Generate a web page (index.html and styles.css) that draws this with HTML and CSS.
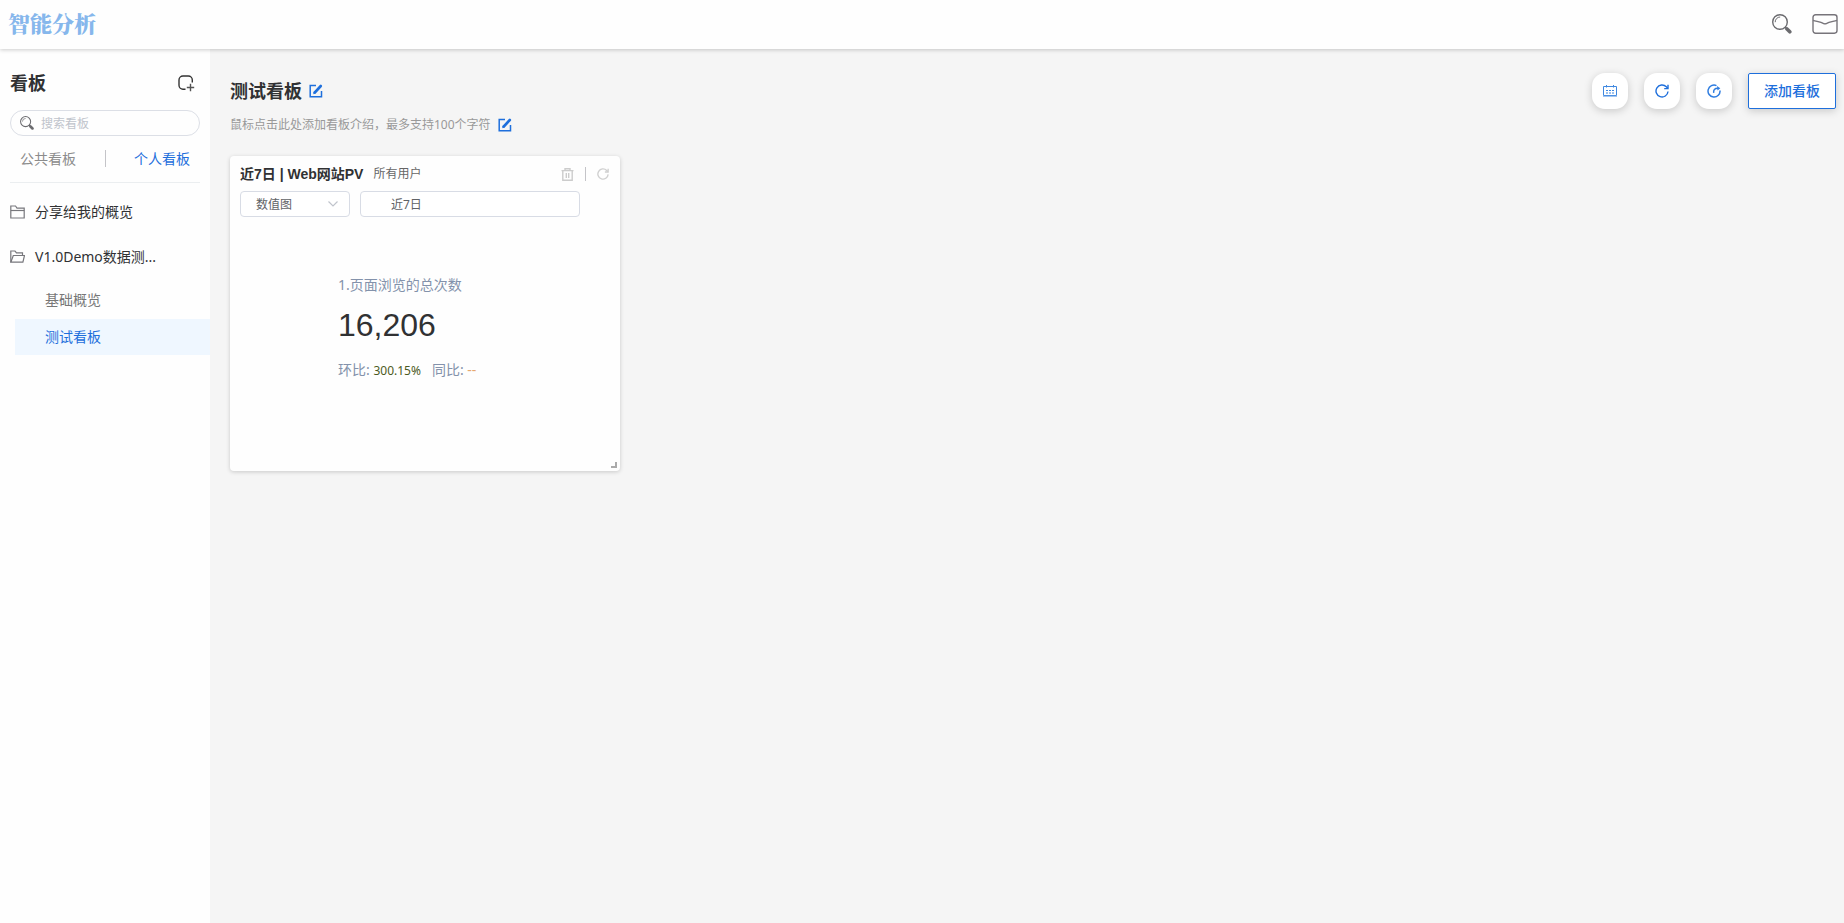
FILE: index.html
```html
<!DOCTYPE html>
<html lang="zh-CN">
<head>
  <meta charset="UTF-8">
  <meta name="viewport" content="width=device-width, initial-scale=1.0">
  <title>智能分析</title>
  <link rel="stylesheet" href="styles.css">
</head>
<body>

  <header class="header">
    <a class="logo" href="#">智能分析</a>
    <div class="header-tools">
      <button class="icon-btn" aria-label="搜索">
        <svg width="20" height="20" viewBox="0 0 20 20" fill="none" stroke="#6b6b6f">
          <circle cx="8" cy="8" r="7.3" stroke-width="1.4"/>
          <path d="M3.2 8.2A5 5 0 0 1 8.2 3" stroke-width="1"/>
          <path d="M13 13l1.6 1.6" stroke-width="1.6"/>
          <path d="M15 15l2.8 2.8" stroke-width="3.6" stroke-linecap="round"/>
        </svg>
      </button>
      <button class="icon-btn" aria-label="消息">
        <svg width="26" height="20" viewBox="0 0 26 20" fill="none" stroke="#77747a" stroke-width="1.4">
          <rect x="1" y="0.8" width="24" height="18.4" rx="2.6"/>
          <path d="M1 6.3c4 1.2 8 1.8 10.3 3.1q1.7.9 3.4 0C17 8.100 21 7.500 25 6.300"/>
        </svg>
      </button>
    </div>
  </header>

  <div class="layout">
    <aside class="sidebar">
      <div class="sidebar-title">
        <h2>看板</h2>
        <button class="icon-btn" aria-label="新建看板">
          <svg width="17" height="17" viewBox="0 0 17 17" fill="none" stroke="#333" stroke-width="1.4">
            <path d="M7.5 14.3H5A4 4 0 0 1 1 10.3V5A4 4 0 0 1 5 1h5.3a4 4 0 0 1 4 4v2.5"/>
            <path d="M12.5 8.8v7.4M8.8 12.5h7.4" stroke="#555"/>
          </svg>
        </button>
      </div>

      <label class="search">
        <svg width="14" height="14" viewBox="0 0 20 20" fill="none" stroke="#6b6b6f">
          <circle cx="8" cy="8" r="7.2" stroke-width="1.5"/>
          <path d="M3.5 8A4.5 4.5 0 0 1 8 3.5" stroke-width="1"/>
          <path d="M13 13l1.6 1.6" stroke-width="1.8"/>
          <path d="M15 15l2.8 2.8" stroke-width="3.8" stroke-linecap="round"/>
        </svg>
        <input type="text" placeholder="搜索看板" aria-label="搜索看板">
      </label>

      <div class="tabs">
        <button class="tab">公共看板</button>
        <span class="tab-line"></span>
        <button class="tab active">个人看板</button>
      </div>

      <nav class="menu">
        <a class="folder" href="#">
          <svg width="15" height="14" viewBox="0 0 15 14" fill="none" stroke="#77777c" stroke-width="1.2">
            <path d="M.8 13V1h4.7l1.5 2.2h7.2V13z"/>
            <path d="M.8 5.5h13.4"/>
          </svg>
          <span>分享给我的概览</span>
        </a>
        <a class="folder" href="#">
          <svg width="15" height="14" viewBox="0 0 15 14" fill="none" stroke="#77777c" stroke-width="1.2">
            <path d="M.8 12.2V1h4.2l1.5 1.8h6V5.5"/>
            <path d="M.8 12.2L3.3 5.5h11.200l-1.600 6.700z"/>
          </svg>
          <span>V1.0Demo数据测...</span>
        </a>
        <a class="board" href="#">基础概览</a>
        <a class="board active" href="#">测试看板</a>
      </nav>
    </aside>

    <main class="main">
      <div class="main-head">
        <div>
          <div class="title-row">
            <h1>测试看板</h1>
            <button class="icon-btn" aria-label="编辑名称">
              <svg width="14" height="14" viewBox="0 0 14 14" fill="none" stroke="#1e6fdc">
                <path d="M7 1.500H1.200v11.300h11.300V7" stroke-width="1.500"/>
                <path d="M5.800 8.500l6-6.500" stroke-width="2.600" stroke-linecap="round"/>
                <path d="M4.600 9.700l.3-1.800 1.400 1.200z" stroke-width=".8"/>
              </svg>
            </button>
          </div>
          <div class="desc-row">
            <p>鼠标点击此处添加看板介绍，最多支持100个字符</p>
            <button class="icon-btn" aria-label="编辑介绍">
              <svg width="14" height="14" viewBox="0 0 14 14" fill="none" stroke="#1e6fdc">
                <path d="M7 1.500H1.200v11.300h11.300V7" stroke-width="1.500"/>
                <path d="M5.800 8.500l6-6.500" stroke-width="2.600" stroke-linecap="round"/>
                <path d="M4.600 9.700l.3-1.800 1.400 1.200z" stroke-width=".8"/>
              </svg>
            </button>
          </div>
        </div>

        <div class="actions">
          <button class="round-btn" aria-label="日期">
            <svg width="14" height="12" viewBox="0 0 14 12" fill="none" stroke="#3f88e0">
              <path d="M.5 1.500h13v9H.5z"/>
              <path d="M0 11.300h14" stroke="#8db8ee"/>
              <path d="M3.500 0v2.500M10.500 0v2.500"/>
              <path d="M3 5.500h8.500M3 8h8.500" stroke-width="1.200" stroke-dasharray="2 1"/>
            </svg>
          </button>
          <button class="round-btn" aria-label="刷新">
            <svg width="14" height="14" viewBox="0 0 14 14" fill="none" stroke="#1e6fdc" stroke-width="1.400">
              <path d="M13 7.500A6 6 0 1 1 11.300 2.800L12.800 4.300"/>
              <path d="M13 .8v3.800H9.200"/>
            </svg>
          </button>
          <button class="round-btn" aria-label="分享">
            <svg width="14" height="14" viewBox="0 0 14 14" fill="none" stroke="#2f7de0" stroke-width="1.500">
              <path d="M9.500 1.600A6 6 0 1 0 13 6.500"/>
              <path d="M6.700 8.800C6.300 6 7.500 4.300 11 4.300"/>
              <path d="M10 2l3.300 2.300L10.500 6.600z" fill="#2f7de0" stroke="none"/>
            </svg>
          </button>
          <button class="add-btn">添加看板</button>
        </div>
      </div>

      <section class="card">
        <div class="card-head">
          <h3>近7日 | Web网站PV</h3>
          <span class="user">所有用户</span>
          <div class="card-tools">
            <button class="icon-btn" aria-label="删除">
              <svg width="13" height="13" viewBox="0 0 13 13" fill="none" stroke="#ccc" stroke-width="1.400">
                <path d="M.5 2.600h12M4 2.400V.7h5v1.700M1.800 3v9.300h9.400V3M5.300 5v5M7.700 5v5"/>
              </svg>
            </button>
            <span class="tool-line"></span>
            <button class="icon-btn" aria-label="刷新">
              <svg width="12" height="12" viewBox="0 0 14 14" fill="none" stroke="#d0d0d0" stroke-width="1.600">
                <path d="M13 7.500A6 6 0 1 1 11.300 2.800L12.800 4.300"/>
                <path d="M13 .8v3.800H9.200"/>
              </svg>
            </button>
          </div>
        </div>

        <div class="filters">
          <div class="select-box">
            <select aria-label="图表类型">
              <option>数值图</option>
            </select>
            <svg width="10" height="6" viewBox="0 0 10 6" fill="none" stroke="#c0c4cc" stroke-width="1.200">
              <path d="M.5.5L5 5 9.500.5"/>
            </svg>
          </div>
          <input class="date" type="text" value="近7日" aria-label="日期范围">
        </div>

        <div class="metric">
          <div class="metric-name">1.页面浏览的总次数</div>
          <div class="metric-value">16,206</div>
          <div class="metric-compare">
            <span>环比: <b class="up">300.15%</b></span>
            <span>同比: <b class="none">--</b></span>
          </div>
        </div>
        <span class="resize"></span>
      </section>
    </main>
  </div>

</body>
</html>
```
FILE: styles.css
```css
* {
  box-sizing: border-box;
}

body {
  margin: 0;
  min-height: 100vh;
  display: flex;
  flex-direction: column;
  font-family: "Noto Sans", "Noto Sans CJK SC", sans-serif;
  font-size: 14px;
  line-height: 20px;
  color: #303133;
  background-color: #f5f5f5;
}

h1, h2, h3, p {
  margin: 0;
}

a {
  color: inherit;
  text-decoration: none;
}

button, input, select {
  font-family: inherit;
  color: inherit;
}

button {
  padding: 0;
  border: none;
  background: none;
  cursor: pointer;
}

.icon-btn {
  display: flex;
}

.header {
  position: relative;
  display: flex;
  align-items: center;
  justify-content: space-between;
  height: 49px;
  padding: 0 6px 2px 8px;
  background-color: #fefefe;
  box-shadow: 0 1px 4px rgba(0, 0, 0, 0.2);
}

.logo {
  font-family: "Noto Serif CJK SC", "Noto Sans CJK SC", serif;
  font-size: 22px;
  font-weight: 900;
  line-height: 32px;
  padding-bottom: 2px;
  color: #86b7ec;
}

.header-tools {
  display: flex;
  align-items: center;
  gap: 20px;
}

.layout {
  display: flex;
  flex: 1;
}

/* sidebar */
.sidebar {
  width: 210px;
  flex-shrink: 0;
  padding-top: 21px;
  background-color: #fefefe;
}

.sidebar-title {
  display: flex;
  align-items: center;
  justify-content: space-between;
  height: 26px;
  padding: 0 15px 0 10px;
}

h1, h2 {
  font-size: 18px;
  line-height: 26px;
  font-weight: bold;
}

.search {
  display: flex;
  align-items: center;
  gap: 7px;
  height: 26px;
  margin: 14px 10px 0;
  padding: 0 9px;
  border: 1px solid #dcdfe6;
  border-radius: 13px;
}

.search input {
  flex: 1;
  min-width: 0;
  padding: 0;
  border: none;
  outline: none;
  background: none;
  font-size: 12px;
}

.search input::placeholder {
  color: #c0c4cc;
}

.tabs {
  display: flex;
  align-items: center;
  justify-content: space-between;
  height: 47px;
  margin: 0 10px;
  padding: 0 10px 2px;
  border-bottom: 1px solid #ebeef0;
}

.tab {
  font-size: 14px;
  color: #8c8c8c;
}

.tab-line {
  width: 1px;
  height: 17px;
  background-color: #c4c4c8;
}

.tab.active {
  color: #1e6fdc;
}

.menu {
  padding-top: 6px;
}

.folder {
  display: flex;
  align-items: center;
  gap: 10px;
  height: 45px;
  padding: 0 10px;
}

.folder svg {
  flex-shrink: 0;
}

.board {
  display: block;
  height: 36px;
  margin-left: 15px;
  padding-left: 30px;
  line-height: 36px;
  color: #777;
}

.folder + .board {
  margin-top: 3px;
}

.board + .board {
  margin-top: 1px;
}

.board.active {
  color: #1e6fdc;
  background-color: #eff7ff;
}

/* content */
.main {
  flex: 1;
  padding: 24px 8px 24px 20px;
}

.main-head {
  display: flex;
  justify-content: space-between;
  align-items: flex-start;
}

.title-row {
  display: flex;
  align-items: center;
  gap: 7px;
  height: 36px;
}

.desc-row {
  display: flex;
  align-items: center;
  gap: 7px;
  height: 32px;
  font-size: 12px;
  color: #999;
}

.actions {
  display: flex;
  gap: 16px;
}

.round-btn {
  display: flex;
  align-items: center;
  justify-content: center;
  width: 36px;
  height: 36px;
  border-radius: 13px;
  background-color: #fff;
  box-shadow: 0 2px 8px rgba(0, 0, 0, 0.18);
}

.add-btn {
  height: 36px;
  padding: 0 15px 2px;
  border: 1px solid #1e6fdc;
  border-radius: 2px;
  background-color: #fff;
  color: #1e6fdc;
  font-size: 14px;
  font-weight: 500;
  box-shadow: 0 2px 8px rgba(0, 0, 0, 0.18);
}

.card {
  position: relative;
  width: 390px;
  height: 315px;
  margin-top: 15px;
  padding: 8px 10px;
  border-radius: 4px;
  background-color: #fefefe;
  box-shadow: 0 1px 4px rgba(0, 0, 0, 0.18);
}

.card-head {
  display: flex;
  align-items: center;
  gap: 10px;
}

.card-head h3 {
  font-family: "Liberation Sans", "Noto Sans CJK SC", sans-serif;
  font-size: 14px;
}

.user {
  font-size: 12px;
  color: #666;
}

.card-tools {
  display: flex;
  align-items: center;
  gap: 11px;
  margin-left: auto;
  padding-right: 1px;
}

.tool-line {
  width: 1px;
  height: 14px;
  background-color: #c4c4c8;
}

.filters {
  display: flex;
  gap: 10px;
  margin-top: 7px;
}

.select-box {
  position: relative;
  width: 110px;
}

.select-box select, .date {
  height: 26px;
  border: 1px solid #d8dce5;
  border-radius: 4px;
  outline: none;
  background-color: #fff;
  font-size: 12px;
  color: #606266;
}

.select-box select {
  width: 100%;
  padding: 0 15px;
  appearance: none;
}

.select-box svg {
  position: absolute;
  top: 10px;
  right: 12px;
  pointer-events: none;
}

.date {
  width: 220px;
  padding: 0 30px;
}

.metric {
  padding: 58px 0 0 98px;
  color: #8392ab;
}

.metric-value {
  margin: 10px 0 15px;
  font-family: "Liberation Sans", Arial, sans-serif;
  font-size: 32px;
  line-height: 40px;
  color: #303133;
}

.metric-compare {
  display: flex;
  gap: 11px;
}

.metric-compare b {
  font-weight: normal;
}

.up {
  font-size: 12px;
  color: #4b5a22;
}

.none {
  color: #e6a870;
}

/* corner handle */
.resize {
  position: absolute;
  right: 3px;
  bottom: 3px;
  width: 6px;
  height: 6px;
  border-right: 2px solid #aaa;
  border-bottom: 2px solid #aaa;
}
```
